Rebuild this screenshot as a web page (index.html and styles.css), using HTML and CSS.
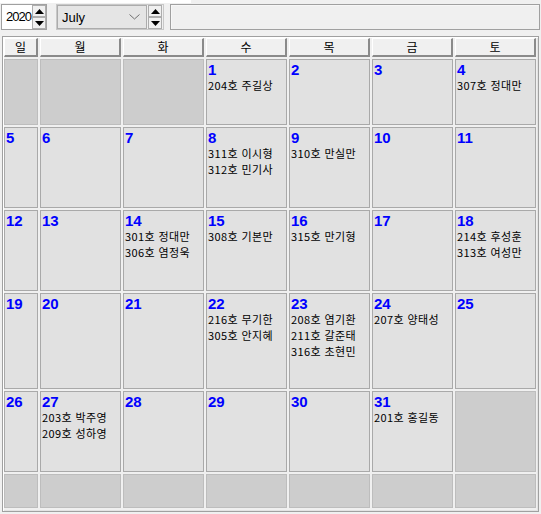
FILE: index.html
```html
<!DOCTYPE html>
<html lang="ko">
<head>
<meta charset="utf-8">
<title>Calendar</title>
<link rel="stylesheet" href="styles.css">
</head>
<body>
<div class="strip"></div>
<div class="toolbar">
  <div class="numctl">
    <div class="yearbox">2020</div>
    <div class="spin">
      <div class="sbtn"><svg width="9" height="5" viewBox="0 0 9 5"><polygon points="0,5 9,5 4.5,0" fill="#000"/></svg></div>
      <div class="sbtn"><svg width="9" height="5" viewBox="0 0 9 5"><polygon points="0,0 9,0 4.5,5" fill="#000"/></svg></div>
    </div>
  </div>
  <div class="monthctl">
    <div class="combo">
      <span class="combotext">July</span>
      <svg class="chev" width="11" height="6" viewBox="0 0 11 6"><polyline points="0.5,0.5 5.5,5 10.5,0.5" fill="none" stroke="#707070" stroke-width="1"/></svg>
    </div>
    <div class="spin">
      <div class="sbtn"><svg width="9" height="5" viewBox="0 0 9 5"><polygon points="0,5 9,5 4.5,0" fill="#000"/></svg></div>
      <div class="sbtn"><svg width="9" height="5" viewBox="0 0 9 5"><polygon points="0,0 9,0 4.5,5" fill="#000"/></svg></div>
    </div>
  </div>
  <div class="textfield"></div>
</div>
<div class="frame">
  <div class="grid">
    <div class="hd">일</div><div class="hd">월</div><div class="hd">화</div><div class="hd">수</div><div class="hd">목</div><div class="hd">금</div><div class="hd">토</div>

    <div class="cell empty"></div>
    <div class="cell empty"></div>
    <div class="cell empty"></div>
    <div class="cell"><div class="num">1</div><div class="ent">204호 주길상</div></div>
    <div class="cell"><div class="num">2</div></div>
    <div class="cell"><div class="num">3</div></div>
    <div class="cell"><div class="num">4</div><div class="ent">307호 정대만</div></div>

    <div class="cell"><div class="num">5</div></div>
    <div class="cell"><div class="num">6</div></div>
    <div class="cell"><div class="num">7</div></div>
    <div class="cell"><div class="num">8</div><div class="ent">311호 이시형</div><div class="ent">312호 민기사</div></div>
    <div class="cell"><div class="num">9</div><div class="ent">310호 만실만</div></div>
    <div class="cell"><div class="num">10</div></div>
    <div class="cell"><div class="num">11</div></div>

    <div class="cell"><div class="num">12</div></div>
    <div class="cell"><div class="num">13</div></div>
    <div class="cell"><div class="num">14</div><div class="ent">301호 정대만</div><div class="ent">306호 염정욱</div></div>
    <div class="cell"><div class="num">15</div><div class="ent">308호 기본만</div></div>
    <div class="cell"><div class="num">16</div><div class="ent">315호 만기형</div></div>
    <div class="cell"><div class="num">17</div></div>
    <div class="cell"><div class="num">18</div><div class="ent">214호 후성훈</div><div class="ent">313호 여성만</div></div>

    <div class="cell"><div class="num">19</div></div>
    <div class="cell"><div class="num">20</div></div>
    <div class="cell"><div class="num">21</div></div>
    <div class="cell"><div class="num">22</div><div class="ent">216호 무기한</div><div class="ent">305호 안지혜</div></div>
    <div class="cell"><div class="num">23</div><div class="ent">208호 염기환</div><div class="ent">211호 갈준태</div><div class="ent">316호 초현민</div></div>
    <div class="cell"><div class="num">24</div><div class="ent">207호 양태성</div></div>
    <div class="cell"><div class="num">25</div></div>

    <div class="cell"><div class="num">26</div></div>
    <div class="cell"><div class="num">27</div><div class="ent">203호 박주영</div><div class="ent">209호 성하영</div></div>
    <div class="cell"><div class="num">28</div></div>
    <div class="cell"><div class="num">29</div></div>
    <div class="cell"><div class="num">30</div></div>
    <div class="cell"><div class="num">31</div><div class="ent">201호 홍길동</div></div>
    <div class="cell empty"></div>

    <div class="cell empty"></div>
    <div class="cell empty"></div>
    <div class="cell empty"></div>
    <div class="cell empty"></div>
    <div class="cell empty"></div>
    <div class="cell empty"></div>
    <div class="cell empty"></div>
  </div>
</div>
</body>
</html>
```
FILE: styles.css
```css
* { box-sizing: border-box; }
html, body { margin: 0; padding: 0; }
body {
  background: #f0f0f0;
  width: 541px;
  height: 514px;
  overflow: hidden;
  font-family: "Noto Sans CJK KR", "Liberation Sans", sans-serif;
}
.strip {
  height: 4px;
  background: linear-gradient(to right, #ffffff 191px, #f0f0f0 191px);
  border-bottom: 1px solid #f0f0f0;
}
.toolbar {
  display: flex;
  align-items: flex-start;
  height: 26px;
  padding-left: 1px;
}
.numctl {
  display: flex;
  width: 46px;
  height: 26px;
  border: 1px solid #a0a0a0;
  background: #fff;
}
.yearbox {
  width: 30px;
  height: 24px;
  background: #fff;
  font-family: "Liberation Sans", Arial, sans-serif;
  font-size: 13px;
  letter-spacing: -1px;
  line-height: 24px;
  padding-left: 4px;
  color: #000;
}
.spin {
  display: flex;
  flex-direction: column;
  width: 14px;
  height: 24px;
}
.sbtn {
  flex: 1;
  display: flex;
  align-items: center;
  justify-content: center;
  background: #f0f0f0;
  border: 1px solid #adadad;
}
.sbtn svg { display: block; }
.monthctl {
  display: flex;
  margin-left: 9px;
  width: 108px;
  height: 26px;
  border: 1px solid #c8c8c8;
  padding: 0 1px 0 0;
  background: #f0f0f0;
}
.combo {
  width: 90px;
  height: 24px;
  background: #e5e5e5;
  border: 1px solid #acacac;
  display: flex;
  align-items: center;
  justify-content: space-between;
  padding: 0 6px 0 4px;
  margin-right: 1px;
}
.combotext {
  font-family: "Liberation Sans", Arial, sans-serif;
  font-size: 13px;
  color: #000;
}
.chev { display: block; }
.textfield {
  margin-left: 6px;
  width: 370px;
  height: 26px;
  border: 1px solid #a0a0a0;
  box-shadow: inset 1px 1px 0 #f7f7f7;
  background: #f0f0f0;
}
.frame {
  margin-top: 6px;
  margin-left: 2px;
  width: 537px;
  height: 476px;
  border: 1px solid #a0a0a0;
  box-shadow: inset 1px 1px 0 #ffffff, inset -1px -1px 0 #e3e3e3;
  padding: 1px 2px 2px 1px;
}
.grid {
  display: grid;
  grid-template-columns: 34px repeat(6, 81px);
  grid-template-rows: 19px 66px 81px 81px 96px 81px 34px;
  column-gap: 2px;
  row-gap: 2px;
}
.hd {
  height: 19px;
  background: #f0f0f0;
  border-top: 1px solid #ffffff;
  border-left: 1px solid #ffffff;
  border-right: 2px solid #8a8a8a;
  border-bottom: 2px solid #8a8a8a;
  text-align: center;
  font-size: 12px;
  line-height: 16px;
  color: #000;
}
.cell {
  background: #e1e1e1;
  border: 1px solid #a9a9a9;
  padding: 0 0 0 1px;
  overflow: hidden;
}
.cell.empty {
  background: #cdcdcd;
  border-color: #bdbdbd;
}
.num {
  height: 17px;
  font-family: "Liberation Sans", Arial, sans-serif;
  font-weight: bold;
  font-size: 15px;
  line-height: 19px;
  color: #0000ff;
}
.ent {
  font-size: 11px;
  letter-spacing: 0.4px;
  line-height: 16px;
  height: 16px;
  color: #000;
  white-space: nowrap;
}
```
